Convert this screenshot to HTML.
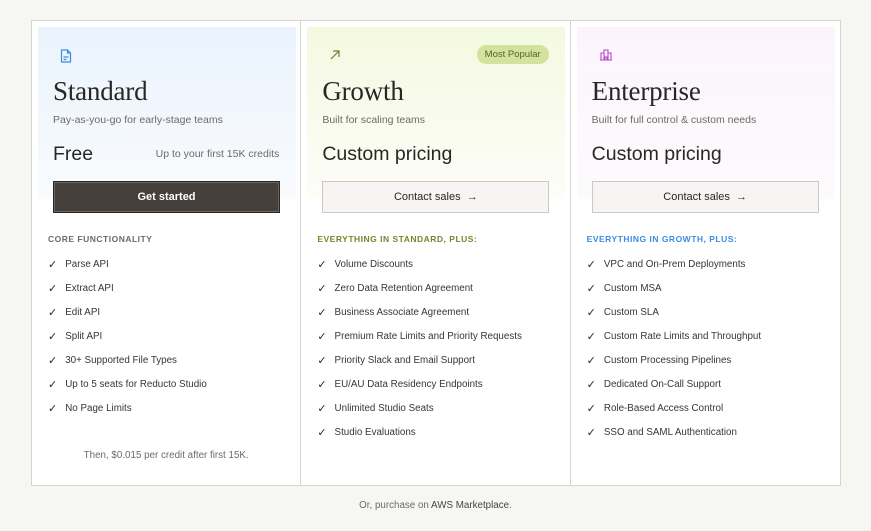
<!DOCTYPE html>
<html><head><meta charset="utf-8"><style>
*{box-sizing:border-box;margin:0;padding:0}
body{width:871px;height:531px;background:#f6f6f3;font-family:"Liberation Sans",sans-serif;position:relative;overflow:hidden;color:#2a2623}
.box{position:absolute;left:31px;top:20px;width:810px;height:466px;background:#fff;border:1px solid #d6d4d0;display:flex}
.col{position:relative;width:270px;height:100%;border-right:1px solid #d6d4d0}
.col:last-child{border-right:none}
.panel{position:absolute;left:6px;top:6px;width:258px;height:172px}
.icon{position:absolute;left:28px;top:28px}
.title{position:absolute;left:21px;top:55px;font-family:"Liberation Serif",serif;font-size:27px;color:#2a2623;letter-spacing:-0.2px}
.sub{position:absolute;left:21px;top:93px;font-size:10.5px;color:#6f6a66}
.price{position:absolute;left:21px;top:122px;font-size:19.5px;color:#2a2623}
.pnote{position:absolute;right:21px;top:127px;font-size:10.5px;color:#6f6a66}
.btn{position:absolute;left:21px;top:160px;width:227px;height:32px;border:1px solid #cfc8c2;background:#f6f5f3;font-size:11px;display:flex;align-items:center;justify-content:center;color:#2a2623}
.btn.dark{background:#45403c;color:#fff;border:1px solid #2a2623;box-shadow:inset 0 0 0 1px #6a645f;font-weight:bold}
.sec{position:absolute;left:16px;top:213px;font-size:8.5px;font-weight:bold;letter-spacing:.5px;color:#6f6a66}
ul{position:absolute;left:16px;top:231px;list-style:none}
li{height:24px;font-size:9.8px;color:#3a3531;display:flex;align-items:center}
li:before{content:"✓";font-size:11px;margin-right:8px;color:#2a2623}
.badge{position:absolute;right:21px;top:24px;background:#d4e29f;color:#5a6420;font-size:9.5px;border-radius:10px;padding:4px 8px}
</style></head><body>
<div class="box">
 <div class="col">
  <div class="panel" style="background:linear-gradient(#eaf3fd,#f9fbfd)"></div>
  <svg class="icon" width="12" height="14" viewBox="0 0 12 14"><path d="M1.5 1h6l3 3v9h-9z M7.5 1v3h3 M3.5 8h5 M3.5 10.5h3" fill="none" stroke="#3b8de0" stroke-width="1.2"/></svg>
  <div class="title">Standard</div>
  <div class="sub">Pay-as-you-go for early-stage teams</div>
  <div class="price">Free</div>
  <div class="pnote">Up to your first 15K credits</div>
  <div class="btn dark">Get started</div>
  <div class="sec">CORE FUNCTIONALITY</div>
  <ul><li>Parse API</li><li>Extract API</li><li>Edit API</li><li>Split API</li><li>30+ Supported File Types</li><li>Up to 5 seats for Reducto Studio</li><li>No Page Limits</li></ul>
  <div style="position:absolute;left:0;width:100%;top:429px;text-align:center;font-size:9.8px;color:#6f6a66">Then, $0.015 per credit after first 15K.</div>
 </div>
 <div class="col">
  <div class="panel" style="background:linear-gradient(#f4f9e0,#fdfdf9)"></div>
  <svg class="icon" width="12" height="12" viewBox="0 0 12 12"><path d="M2 10L10 2 M4 2h6v6" fill="none" stroke="#6b7d2a" stroke-width="1.2"/></svg>
  <div class="badge">Most Popular</div>
  <div class="title">Growth</div>
  <div class="sub">Built for scaling teams</div>
  <div class="price">Custom pricing</div>
  <div class="btn">Contact sales&nbsp;&nbsp;→</div>
  <div class="sec" style="color:#76862c">EVERYTHING IN STANDARD, PLUS:</div>
  <ul><li>Volume Discounts</li><li>Zero Data Retention Agreement</li><li>Business Associate Agreement</li><li>Premium Rate Limits and Priority Requests</li><li>Priority Slack and Email Support</li><li>EU/AU Data Residency Endpoints</li><li>Unlimited Studio Seats</li><li>Studio Evaluations</li></ul>
 </div>
 <div class="col">
  <div class="panel" style="background:linear-gradient(#fcf4fd,#fcfbfc)"></div>
  <svg class="icon" width="14" height="12" viewBox="0 0 14 12"><path d="M1 11h12 M2 11V4h3V1h4v3h3v7 M5 4v7 M9 4v7 M6 11V8h2v3" fill="none" stroke="#b44bc4" stroke-width="1.1"/></svg>
  <div class="title">Enterprise</div>
  <div class="sub">Built for full control &amp; custom needs</div>
  <div class="price">Custom pricing</div>
  <div class="btn">Contact sales&nbsp;&nbsp;→</div>
  <div class="sec" style="color:#3b8de0">EVERYTHING IN GROWTH, PLUS:</div>
  <ul><li>VPC and On-Prem Deployments</li><li>Custom MSA</li><li>Custom SLA</li><li>Custom Rate Limits and Throughput</li><li>Custom Processing Pipelines</li><li>Dedicated On-Call Support</li><li>Role-Based Access Control</li><li>SSO and SAML Authentication</li></ul>
 </div>
</div>
<div style="position:absolute;left:0;width:871px;top:500px;text-align:center;font-size:9.8px;color:#6f6a66">Or, purchase on <span style="color:#4a4540">AWS Marketplace</span>.</div>
</body></html>
